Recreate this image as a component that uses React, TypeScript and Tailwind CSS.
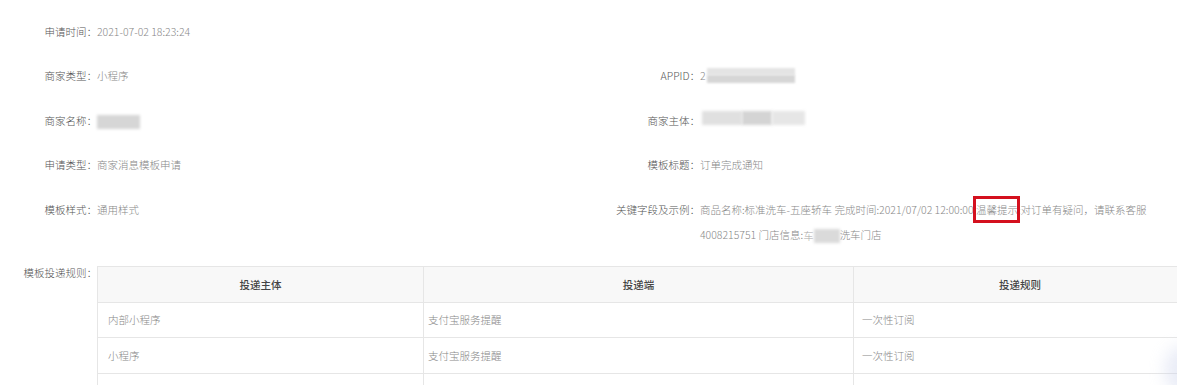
import React from 'react';

const Blur = ({ w, tone = 'bg-[#d6d6d6]' }: { w: string; tone?: string }) => (
  <span className={`inline-block align-middle h-[14px] ${w} ${tone} blur-[1.5px]`} />
);

const LeftItem = ({ label, children }: { label: string; children: React.ReactNode }) => (
  <div className="flex">
    <span className="w-[97px] shrink-0 text-right text-[#555]">{label}</span>
    <span className="text-[#888]">{children}</span>
  </div>
);

const RightItem = ({ label, children }: { label: string; children: React.ReactNode }) => (
  <div className="flex">
    <span className="w-[100px] shrink-0 text-right text-[#555]">{label}</span>
    <span className="text-[#888]">{children}</span>
  </div>
);

const rows = [
  { subject: '内部小程序', side: '支付宝服务提醒', rule: '一次性订阅' },
  { subject: '小程序', side: '支付宝服务提醒', rule: '一次性订阅' },
  { subject: '', side: '', rule: '' },
];

export default function App() {
  return (
    <div className="relative w-[1177px] h-[385px] overflow-hidden bg-white font-['Noto_Sans_CJK_SC','Microsoft_YaHei',sans-serif] text-[10.5px] font-light leading-[25px]">
      <div className="flex flex-col gap-[19.5px] pt-[18.5px]">
        <div className="grid grid-cols-[600px_1fr]">
          <LeftItem label="申请时间：">2021-07-02 18:23:24</LeftItem>
          <div />
        </div>
        <div className="grid grid-cols-[600px_1fr]">
          <LeftItem label="商家类型：">小程序</LeftItem>
          <RightItem label="APPID：">
            <span className="inline-flex items-center gap-[1px]">
              2
              <span className="inline-flex flex-col">
                <span className="h-[7px] w-[88px] bg-[#e4e4e4] blur-[1px]" />
                <span className="h-[8px] w-[88px] bg-[#d6d6d6] blur-[1px]" />
              </span>
            </span>
          </RightItem>
        </div>
        <div className="grid grid-cols-[600px_1fr]">
          <LeftItem label="商家名称：">
            <Blur w="w-[43px]" tone="bg-[#d6d6d6]" />
          </LeftItem>
          <RightItem label="商家主体：">
            <span className="inline-flex items-center pl-[2px]">
              <span className="h-[14px] w-[40px] bg-[#e0e0e0] blur-[1.5px]" />
              <span className="h-[14px] w-[30px] bg-[#d4d4d4] blur-[1.5px]" />
              <span className="h-[14px] w-[33px] bg-[#e6e6e6] blur-[1.5px]" />
            </span>
          </RightItem>
        </div>
        <div className="grid grid-cols-[600px_1fr]">
          <LeftItem label="申请类型：">商家消息模板申请</LeftItem>
          <RightItem label="模板标题：">订单完成通知</RightItem>
        </div>
        <div className="grid grid-cols-[600px_1fr]">
          <LeftItem label="模板样式：">通用样式</LeftItem>
          <RightItem label="关键字段及示例：">
            商品名称:标准洗车-五座轿车 完成时间:2021/07/02 12:00:00{' '}
            <span className="relative inline-block">
              温馨提示
              <span className="absolute left-[-3px] right-[-2px] top-[-1px] h-[27px] border-[3px] border-[#d4101e]" />
            </span>
            :对订单有疑问，请联系客服
            <br />
            4008215751 门店信息:
            <span className="inline-flex items-center align-middle">
              <span className="text-[#aaa]">车</span>
              <span className="h-[14px] w-[26px] bg-[#dadada] blur-[1.5px]" />
            </span>
            洗车门店
          </RightItem>
        </div>
      </div>

      <div className="mt-[17.5px] flex">
        <span className="w-[97px] shrink-0 text-right leading-[14px] text-[#555]">模板投递规则：</span>
        <table className="w-[1090px] shrink-0 table-fixed border-collapse">
          <colgroup>
            <col className="w-[326px]" />
            <col className="w-[430px]" />
            <col />
          </colgroup>
          <thead>
            <tr className="h-[36px] bg-[#f8f8f8]">
              <th className="border border-[#e6e6e6] text-center font-medium text-[#444]">投递主体</th>
              <th className="border border-[#e6e6e6] text-center font-medium text-[#444]">投递端</th>
              <th className="border border-[#e6e6e6] text-center font-medium text-[#444]">投递规则</th>
            </tr>
          </thead>
          <tbody>
            {rows.map((r, i) => (
              <tr key={i} className="h-[35.5px]">
                <td className="border border-[#e6e6e6] px-[10px] text-[#888]">{r.subject}</td>
                <td className="border border-[#e6e6e6] px-[4px] text-[#888]">{r.side}</td>
                <td className="border border-[#e6e6e6] px-[8px] text-[#888]">{r.rule}</td>
              </tr>
            ))}
          </tbody>
        </table>
      </div>

      <div className="absolute right-[-30px] top-[345px] h-[50px] w-[42px] rounded-full bg-[#c9d0ea] opacity-40 blur-[8px]" />
    </div>
  );
}
